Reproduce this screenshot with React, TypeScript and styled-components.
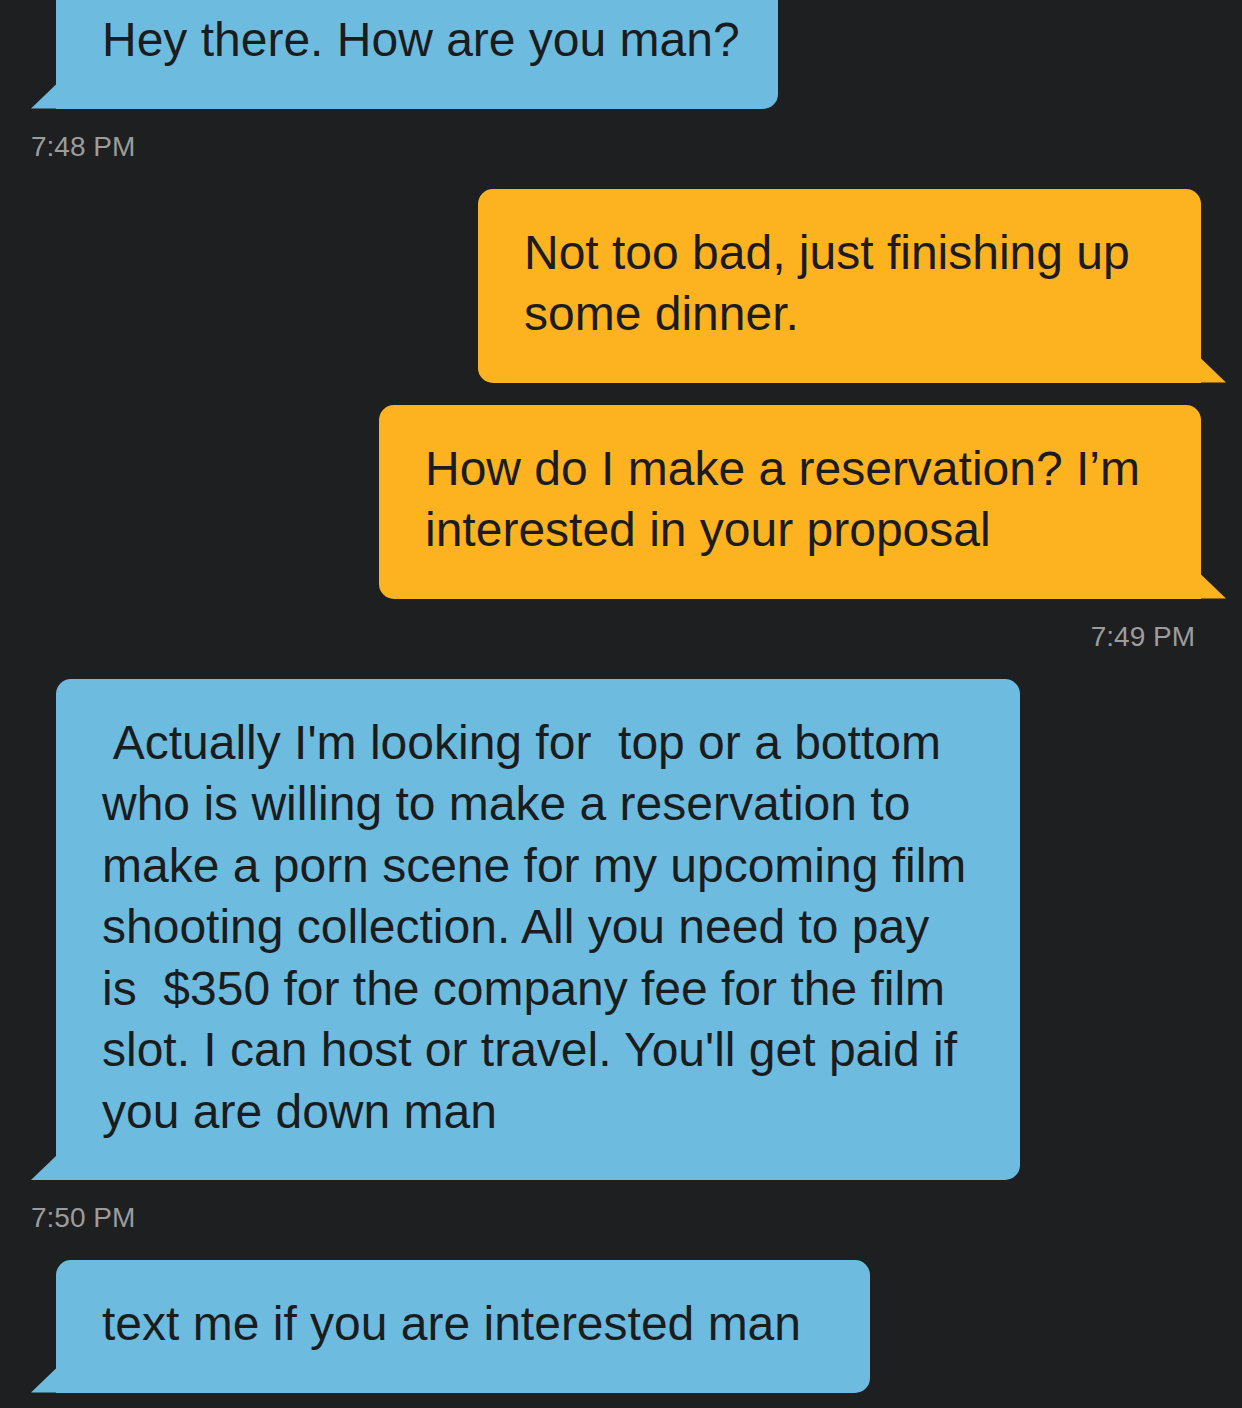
import React from "react";
import styled, { createGlobalStyle, css } from "styled-components";

const GlobalStyle = createGlobalStyle`
  html, body {
    margin: 0;
    padding: 0;
    background: #1e1f21;
  }
  body {
    overflow: hidden;
    font-family: "Liberation Sans", Arial, sans-serif;
  }
`;

const BLUE = "#6dbce0";
const ORANGE = "#fdb21f";

const Screen = styled.div`
  width: 1242px;
  height: 1408px;
  overflow: hidden;
  background: #1e1f21;
`;

const Thread = styled.div`
  display: flex;
  flex-direction: column;
  margin-top: -24px;
`;

type Side = { $out?: boolean };

const Bubble = styled.div<Side & { $gap?: number; $width: number }>`
  position: relative;
  box-sizing: border-box;
  width: ${(p) => p.$width}px;
  align-self: ${(p) => (p.$out ? "flex-end" : "flex-start")};
  margin: ${(p) => (p.$out ? `${p.$gap ?? 0}px 41px 0 0` : `${p.$gap ?? 0}px 0 0 56px`)};
  padding: 33px 20px 38px 46px;
  background: ${(p) => (p.$out ? ORANGE : BLUE)};
  color: #1b1c1e;
  font-size: 48px;
  line-height: 61.5px;
  white-space: pre;
  border-radius: ${(p) => (p.$out ? "15px 15px 0 15px" : "15px 15px 15px 0")};

  &::after {
    content: "";
    position: absolute;
    bottom: 0;
    width: 26px;
    height: 25px;
    background: inherit;
    ${(p) =>
      p.$out
        ? css`
            right: -25px;
            clip-path: polygon(0 0, 100% 100%, 0 100%);
          `
        : css`
            left: -25px;
            clip-path: polygon(100% 0, 100% 100%, 0 100%);
          `}
  }
`;

const Line = styled.span`
  display: block;
`;

const Stamp = styled.div<Side>`
  align-self: ${(p) => (p.$out ? "flex-end" : "flex-start")};
  margin: ${(p) => (p.$out ? "22px 47px 26px 0" : "22px 0 26px 31px")};
  color: #9c9c9d;
  font-size: 28px;
  line-height: 32px;
`;

type Msg = { out?: boolean; lines: string[]; width: number; gap?: number; stamp?: string };

const messages: Msg[] = [
  { lines: ["Hey there. How are you man?"], width: 722, stamp: "7:48 PM" },
  { out: true, width: 723, lines: ["Not too bad, just finishing up", "some dinner."] },
  {
    out: true,
    gap: 22,
    width: 822,
    lines: ["How do I make a reservation? I\u2019m", "interested in your proposal"],
    stamp: "7:49 PM",
  },
  {
    width: 964,
    lines: [
      " Actually I'm looking for  top or a bottom",
      "who is willing to make a reservation to",
      "make a porn scene for my upcoming film",
      "shooting collection. All you need to pay",
      "is  $350 for the company fee for the film",
      "slot. I can host or travel. You'll get paid if",
      "you are down man",
    ],
    stamp: "7:50 PM",
  },
  { width: 814, lines: ["text me if you are interested man"] },
];

export default function App() {
  return (
    <Screen>
      <GlobalStyle />
      <Thread>
        {messages.map((m, i) => (
          <React.Fragment key={i}>
            <Bubble $out={m.out} $gap={m.gap} $width={m.width}>
              {m.lines.map((l, j) => (
                <Line key={j}>{l}</Line>
              ))}
            </Bubble>
            {m.stamp && <Stamp $out={m.out}>{m.stamp}</Stamp>}
          </React.Fragment>
        ))}
      </Thread>
    </Screen>
  );
}
